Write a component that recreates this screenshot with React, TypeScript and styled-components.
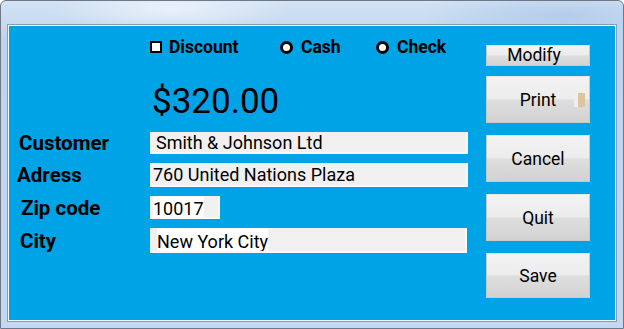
import styled, { createGlobalStyle } from "styled-components";

const GlobalStyle = createGlobalStyle`
  html, body {
    margin: 0;
    padding: 0;
    background: #ffffff;
  }
  body {
    font-family: Roboto, "Liberation Sans", sans-serif;
  }
`;

const Window = styled.div`
  box-sizing: border-box;
  width: 624px;
  height: 329px;
  display: flex;
  flex-direction: column;
  padding: 0 6px 6px 6px;
  border: 1px solid #6d7987;
  border-radius: 6px 6px 0 0;
  background:
    radial-gradient(ellipse 120px 26px at 170px 8px, rgba(255, 255, 255, 0.55), transparent),
    radial-gradient(ellipse 140px 30px at 560px 14px, rgba(150, 185, 225, 0.45), transparent),
    linear-gradient(180deg, #d3e3f5 0%, #bdd4ed 12%, #c4d8ef 100%);
`;

const TitleBar = styled.div`
  height: 23px;
  flex: none;
`;

const Panel = styled.div`
  flex: 1;
  display: flex;
  background: #00a3e6;
  border: 1px solid #8c9cae;
  box-shadow: inset 0 0 0 1px #f4f8fc;
  padding: 1px;
`;

const FormColumn = styled.div`
  flex: 1;
  display: flex;
  flex-direction: column;
  padding-top: 13px;
`;

const OptionsRow = styled.div`
  display: flex;
  align-items: center;
  height: 16px;
  margin-left: 141px;
`;

const Option = styled.label<{ $width: number }>`
  display: flex;
  align-items: center;
  width: ${({ $width }) => $width}px;
  font-size: 17.5px;
  font-weight: 700;
  line-height: 16px;
  color: #000;
`;

const CheckBox = styled.span`
  box-sizing: border-box;
  width: 12px;
  height: 12px;
  margin-right: 7px;
  background: #fff;
  border: 2px solid #000;
`;

const Radio = styled.span`
  box-sizing: border-box;
  width: 13px;
  height: 13px;
  margin-right: 8px;
  background: #fff;
  border: 3px solid #000;
  border-radius: 50%;
`;

const Amount = styled.div`
  margin: 27px 0 0 143px;
  font-size: 35px;
  line-height: 40px;
  color: #000;
`;

const Fields = styled.div`
  display: flex;
  flex-direction: column;
  gap: 9px;
  margin-top: 10px;
`;

const FieldRow = styled.div<{ $height: number }>`
  display: flex;
  align-items: center;
  height: ${({ $height }) => $height}px;
`;

const FieldLabel = styled.div<{ $indent: number }>`
  box-sizing: border-box;
  width: 141px;
  padding-left: ${({ $indent }) => $indent}px;
  font-size: 20.5px;
  font-weight: 700;
  color: #000;
`;

const TextBox = styled.div<{ $width: number; $pad: number }>`
  box-sizing: border-box;
  width: ${({ $width }) => $width}px;
  height: 100%;
  display: flex;
  align-items: center;
  padding-left: ${({ $pad }) => $pad}px;
  background: #f0f0f0;
  border-right: 2px solid #f9f9f9;
  border-bottom: 2px solid #f9f9f9;
  font-size: 18px;
  color: #000;
  white-space: nowrap;
  overflow: hidden;
`;

const Value = styled.span<{ $highlight?: boolean }>`
  background: ${({ $highlight }) => ($highlight ? "#ffffff" : "transparent")};
  padding-top: ${({ $highlight }) => ($highlight ? "3px" : "0")};
`;

const ButtonColumn = styled.div`
  width: 104px;
  margin-right: 25px;
  display: flex;
  flex-direction: column;
  gap: 12px;
  padding-top: 19px;
`;

const Button = styled.button<{ $height: number }>`
  position: relative;
  box-sizing: border-box;
  height: ${({ $height }) => $height}px;
  padding: 0;
  border: 1px solid #c9c9c9;
  border-top-color: #e6e6e6;
  background: linear-gradient(
    180deg,
    #f3f3f3 0%,
    #ececec 48%,
    #dedede 52%,
    #d2d2d2 100%
  );
  font-family: Roboto, "Liberation Sans", sans-serif;
  font-size: 17.5px;
  color: #000;
`;

const ModifyButton = styled(Button)`
  margin-bottom: -2px;
  line-height: 19px;
  text-indent: -8px;
`;

const FocusMark = styled.span`
  position: absolute;
  right: 4px;
  top: 16px;
  width: 11px;
  height: 14px;
  background: linear-gradient(90deg, #eeeeee 0 4px, #dcc59e 4px);
`;

const fields = [
  { label: "Customer", indent: 10, height: 22, width: 318, pad: 6, value: "Smith & Johnson Ltd" },
  { label: "Adress", indent: 8, height: 24, width: 318, pad: 3, value: "760 United Nations Plaza" },
  { label: "Zip code", indent: 12, height: 23, width: 70, pad: 3, value: "10017", highlight: true },
  { label: "City", indent: 11, height: 25, width: 317, pad: 7, value: "New York City", highlight: true },
];

export default function App() {
  return (
    <>
      <GlobalStyle />
      <Window>
        <TitleBar />
        <Panel>
          <FormColumn>
            <OptionsRow>
              <Option $width={130}>
                <CheckBox />
                Discount
              </Option>
              <Option $width={96}>
                <Radio />
                Cash
              </Option>
              <Option $width={80}>
                <Radio />
                Check
              </Option>
            </OptionsRow>

            <Amount>$320.00</Amount>

            <Fields>
              {fields.map((f) => (
                <FieldRow key={f.label} $height={f.height}>
                  <FieldLabel $indent={f.indent}>{f.label}</FieldLabel>
                  <TextBox $width={f.width} $pad={f.pad}>
                    <Value $highlight={f.highlight}>{f.value}</Value>
                  </TextBox>
                </FieldRow>
              ))}
            </Fields>
          </FormColumn>

          <ButtonColumn>
            <ModifyButton $height={21}>Modify</ModifyButton>
            <Button $height={47}>
              Print
              <FocusMark />
            </Button>
            <Button $height={47}>Cancel</Button>
            <Button $height={47}>Quit</Button>
            <Button $height={45}>Save</Button>
          </ButtonColumn>
        </Panel>
      </Window>
    </>
  );
}
